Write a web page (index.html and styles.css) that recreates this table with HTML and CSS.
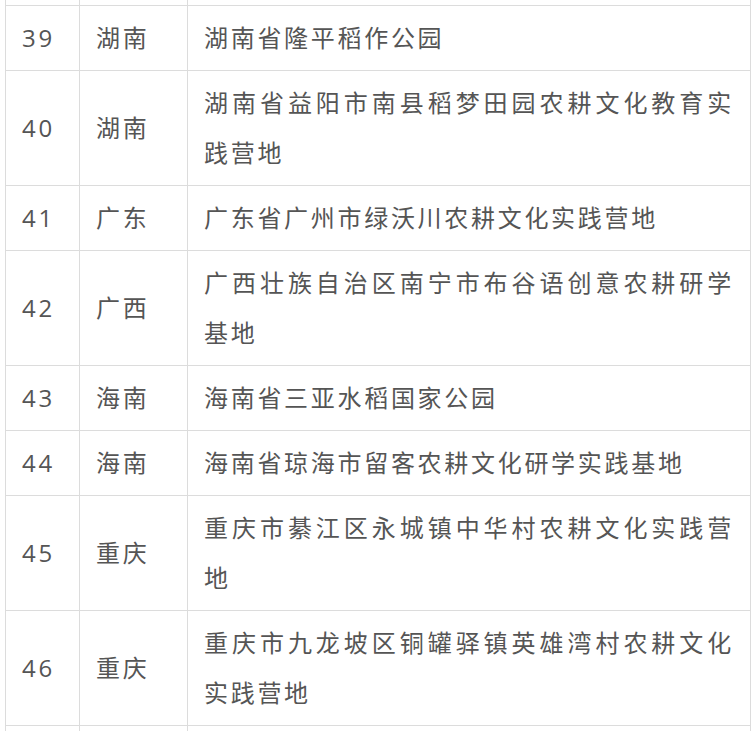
FILE: index.html
```html
<!DOCTYPE html>
<html lang="zh-CN">
<head>
<meta charset="utf-8">
<title>农耕文化实践营地</title>
<link rel="stylesheet" href="styles.css">
</head>
<body>
<div class="page">
<table class="list">
  <colgroup>
    <col class="c-no">
    <col class="c-prov">
    <col class="c-name">
  </colgroup>
  <tbody>
    <tr class="edge-top"><td></td><td></td><td></td></tr>
    <tr><td class="num">39</td><td class="prov">湖南</td><td class="name">湖南省隆平稻作公园</td></tr>
    <tr><td class="num">40</td><td class="prov">湖南</td><td class="name">湖南省益阳市南县稻梦田园农耕文化教育实践营地</td></tr>
    <tr><td class="num">41</td><td class="prov">广东</td><td class="name">广东省广州市绿沃川农耕文化实践营地</td></tr>
    <tr><td class="num">42</td><td class="prov">广西</td><td class="name">广西壮族自治区南宁市布谷语创意农耕研学基地</td></tr>
    <tr><td class="num">43</td><td class="prov">海南</td><td class="name">海南省三亚水稻国家公园</td></tr>
    <tr><td class="num">44</td><td class="prov">海南</td><td class="name">海南省琼海市留客农耕文化研学实践基地</td></tr>
    <tr><td class="num">45</td><td class="prov">重庆</td><td class="name">重庆市綦江区永城镇中华村农耕文化实践营地</td></tr>
    <tr><td class="num">46</td><td class="prov">重庆</td><td class="name">重庆市九龙坡区铜罐驿镇英雄湾村农耕文化实践营地</td></tr>
    <tr class="edge-bottom"><td></td><td></td><td></td></tr>
  </tbody>
</table>
</div>
</body>
</html>
```
FILE: styles.css
```css
html, body {
  margin: 0;
  padding: 0;
  background: #ffffff;
}

.page {
  height: 731px;
  overflow: hidden;
  padding-left: 5px;
}

.list {
  border-collapse: collapse;
  table-layout: fixed;
  width: 745px;
  font-family: "Open Sans", "Noto Sans CJK SC", sans-serif;
  font-size: 24px;
  letter-spacing: 2.7px;
  line-height: 50px;
  color: #555555;
}

.c-no { width: 74px; }
.c-prov { width: 108px; }
.c-name { width: 563px; }

.list td {
  border: 1px solid #dcdcdc;
  padding: 7px 16px;
  vertical-align: middle;
  text-align: left;
}

.list td.name {
  text-align: justify;
}

.edge-top td {
  border-top: none;
  height: 5px;
  padding: 0;
  line-height: 0;
}

.edge-bottom td {
  border-bottom: none;
  height: 20px;
  padding: 0;
  line-height: 0;
}
```
